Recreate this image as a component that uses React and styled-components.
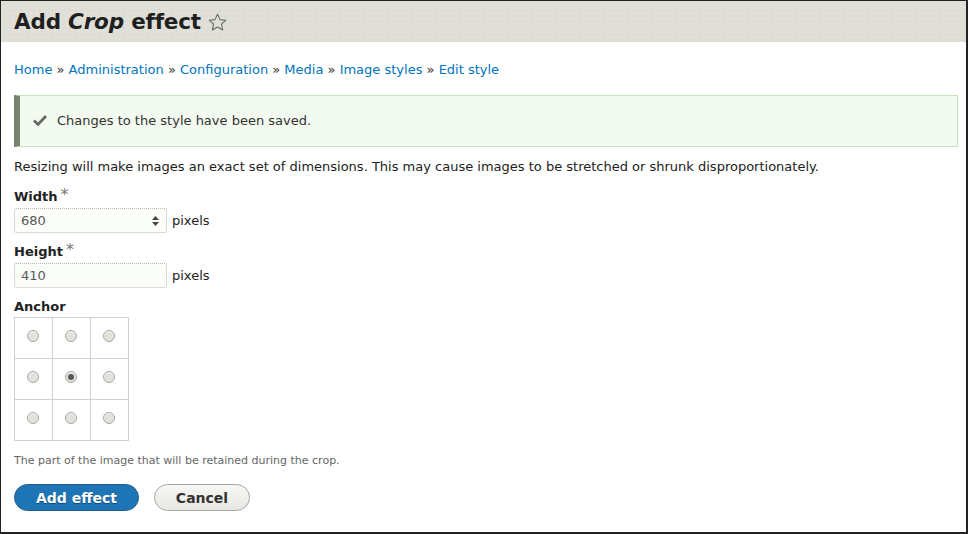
import styled, { createGlobalStyle } from "styled-components";

const GlobalStyle = createGlobalStyle`
  html, body {
    margin: 0;
    padding: 0;
    background: #fff;
  }
  * {
    box-sizing: border-box;
  }
`

const SFrame = styled.div`
  width: 968px;
  height: 534px;
  border: 1px solid #222;
  border-right-width: 2px;
  border-bottom-width: 2px;
  font-family: "DejaVu Sans", "Liberation Sans", sans-serif;
  color: #222;
  background: #fff;
  overflow: hidden;
`

const SHeader = styled.div`
  display: flex;
  align-items: center;
  height: 41px;
  padding: 0 13px;
  background-color: #e0e0d8;
  background-image: radial-gradient(#d2d2ca 0.6px, transparent 0.8px);
  background-size: 6px 6px;
`

const STitle = styled.h1`
  margin: 0;
  font-size: 21.5px;
  font-weight: 700;
  color: #1f1f1f;
  letter-spacing: -0.2px;

  & > em {
    font-style: italic;
  }
`

const SStar = styled.svg`
  margin-left: 6px;
  margin-top: 1px;
`

const SContent = styled.div`
  display: flex;
  flex-direction: column;
  padding: 0 8px 0 13px;
`

const SBreadcrumb = styled.nav`
  margin-top: 20px;
  font-size: 13px;
  line-height: 16px;
  color: #333;

  & a {
    color: #0074bd;
    text-decoration: none;
  }
`

const SMessage = styled.div`
  display: flex;
  align-items: center;
  gap: 10px;
  margin-top: 17px;
  height: 52px;
  padding-left: 13px;
  padding-bottom: 2px;
  background-color: #f3faef;
  border: 1px solid #c9e1bd;
  border-left: 6px solid #77836f;
  font-size: 13px;
  color: #325e1c;

  & > span {
    color: #333;
  }
`

const SText = styled.p`
  margin: 12px 0 0;
  font-size: 13px;
  line-height: 16px;
`

const SField = styled.div`
  display: flex;
  flex-direction: column;
  margin-top: ${({ $top }) => $top}px;
`

const SLabel = styled.label`
  font-size: 13px;
  font-weight: 700;
  line-height: 16px;

  & > sup {
    margin-left: 3px;
    font-size: 16px;
    font-weight: 400;
    color: #777;
    vertical-align: 0;
    position: relative;
    top: -1px;
  }
`

const SInputRow = styled.div`
  display: flex;
  align-items: center;
  gap: 5px;
  margin-top: 3px;
  font-size: 13px;
`

const SInput = styled.div`
  display: flex;
  align-items: center;
  justify-content: space-between;
  width: 153px;
  height: 25px;
  padding: 0 6px 0 6px;
  background: #fbfdf9;
  border: 1px dotted #b8b8b8;
  border-radius: 2px;
  font-size: 13px;
  color: #595959;
`

const SGrid = styled.div`
  display: grid;
  grid-template-columns: repeat(3, 38px);
  grid-template-rows: repeat(3, 41px);
  width: 115px;
  margin-top: 2px;
  border-top: 1px solid #cdd3d0;
  border-left: 1px solid #cdd3d0;
`

const SCell = styled.div`
  display: flex;
  align-items: center;
  justify-content: center;
  padding: 0 1px 5px 0;
  border-right: 1px solid #cdd3d0;
  border-bottom: 1px solid #cdd3d0;
`

const SRadio = styled.span`
  display: flex;
  align-items: center;
  justify-content: center;
  width: 12px;
  height: 12px;
  border-radius: 50%;
  background: #e2e1dc;
  border: 1px solid #a4aaa6;
  box-shadow: inset 0 1px 1px rgba(255, 255, 255, 0.8);

  &::after {
    content: "";
    display: ${({ $checked }) => ($checked ? "block" : "none")};
    width: 6px;
    height: 6px;
    border-radius: 50%;
    background: #555c58;
  }
`

const SHint = styled.div`
  margin-top: 13px;
  font-size: 11px;
  line-height: 14px;
  color: #666;
`

const SButtons = styled.div`
  display: flex;
  gap: 15px;
  margin-top: 16px;
`

const SPrimaryButton = styled.button`
  width: 125px;
  height: 27px;
  border: 1px solid #1e5c90;
  border-radius: 14px;
  background: #1e75b5;
  color: #fff;
  font-family: inherit;
  font-size: 14px;
  font-weight: 700;
  text-shadow: 0 1px 1px rgba(0, 0, 0, 0.4);
`

const SButton = styled.button`
  width: 96px;
  height: 27px;
  border: 1px solid #a6a6a6;
  border-radius: 14px;
  background: linear-gradient(#f6f6f3, #e8e8e3);
  color: #333;
  font-family: inherit;
  font-size: 14px;
  font-weight: 700;
`

const crumbs = ["Home", "Administration", "Configuration", "Media", "Image styles", "Edit style"];

const App = () => {
  return (
    <SFrame>
      <GlobalStyle />
      <SHeader>
        <STitle>Add <em>Crop</em> effect</STitle>
        <SStar width="21" height="21" viewBox="0 0 24 24">
          <path
            d="M12 2.5l2.9 6.2 6.6.7-5 4.5 1.4 6.6L12 17.1l-5.9 3.4 1.4-6.6-5-4.5 6.6-.7z"
            fill="none"
            stroke="#666"
            strokeWidth="1.2"
            strokeLinejoin="round"
          />
        </SStar>
      </SHeader>
      <SContent>
        <SBreadcrumb>
          {crumbs.map((c, i) => (
            <span key={c}>
              {i > 0 && " » "}
              <a href="#">{c}</a>
            </span>
          ))}
        </SBreadcrumb>
        <SMessage>
          <svg width="14" height="12" viewBox="0 0 14 12">
            <path d="M1 6.5l4 4L13 2" fill="none" stroke="#666" strokeWidth="2.6" />
          </svg>
          <span>Changes to the style have been saved.</span>
        </SMessage>
        <SText>
          Resizing will make images an exact set of dimensions. This may cause images to be stretched or shrunk disproportionately.
        </SText>
        <SField $top={13}>
          <SLabel>Width<sup>*</sup></SLabel>
          <SInputRow>
            <SInput>
              680
              <svg width="9" height="12" viewBox="0 0 9 12">
                <path d="M1 5l3.5-4L8 5zM1 7l3.5 4L8 7z" fill="#444" />
              </svg>
            </SInput>
            pixels
          </SInputRow>
        </SField>
        <SField $top={10}>
          <SLabel>Height<sup>*</sup></SLabel>
          <SInputRow>
            <SInput>410</SInput>
            pixels
          </SInputRow>
        </SField>
        <SField $top={11}>
          <SLabel>Anchor</SLabel>
          <SGrid>
            {Array.from({ length: 9 }).map((_, i) => (
              <SCell key={i}>
                <SRadio $checked={i === 4} />
              </SCell>
            ))}
          </SGrid>
        </SField>
        <SHint>The part of the image that will be retained during the crop.</SHint>
        <SButtons>
          <SPrimaryButton>Add effect</SPrimaryButton>
          <SButton>Cancel</SButton>
        </SButtons>
      </SContent>
    </SFrame>
  );
};

export default App;
